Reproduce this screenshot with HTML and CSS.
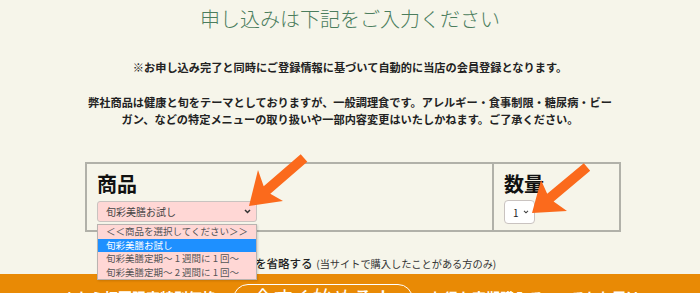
FILE: index.html
```html
<!DOCTYPE html>
<html lang="ja">
<head>
    <meta charset="UTF-8">
    <meta name="viewport" content="width=device-width, initial-scale=1.0">
    <title>お申し込み</title>
    <link rel="stylesheet" href="styles.css">
</head>
<body>

    <div class="page">
        <h1 class="title">申し込みは下記をご入力ください</h1>

        <p class="note">※お申し込み完了と同時にご登録情報に基づいて自動的に当店の会員登録となります。</p>
        <p class="notice">弊社商品は健康と旬をテーマとしておりますが、一般調理食です。アレルギー・食事制限・糖尿病・ビー<br>ガン、などの特定メニューの取り扱いや一部内容変更はいたしかねます。ご了承ください。</p>

        <table class="order">
            <tr>
                <td class="col-item">
                    <div class="label">商品</div>
                    <div class="select-wrap">
                        <div class="select select-item">
                            <span>旬彩美膳お試し</span>
                            <svg class="chev" width="7" height="5" viewBox="0 0 7 5"><path d="M1 1 L3.5 3.5 L6 1" fill="none" stroke="#333" stroke-width="1.5"/></svg>
                        </div>
                        <ul class="options">
                            <li>＜＜商品を選択してください＞＞</li>
                            <li class="active">旬彩美膳お試し</li>
                            <li>旬彩美膳定期～ 1 週間に 1 回～</li>
                            <li>旬彩美膳定期～ 2 週間に 1 回～</li>
                        </ul>
                    </div>
                </td>
                <td class="col-qty">
                    <div class="label">数量</div>
                    <div class="select select-qty">
                        <span>1</span>
                        <svg class="chev" width="6" height="4" viewBox="0 0 7 5"><path d="M1 1 L3.5 3.5 L6 1" fill="none" stroke="#444" stroke-width="1.4"/></svg>
                    </div>
                </td>
            </tr>
        </table>

        <div class="skip">
            <input type="checkbox" class="skip-check">
            <span class="skip-main">ログイン情報の入力を省略する</span>
            <span class="skip-sub">(当サイトで購入したことがある方のみ)</span>
        </div>

        <div class="band">
            <span class="band-text band-left">いまなら初回限定特別価格</span>
            <span class="band-btn">今すぐ始める！</span>
            <span class="band-text band-right">お得な定期購入でいつでもお届け</span>
        </div>

        <!-- 注意喚起の矢印 -->
        <svg class="arrows" width="700" height="293" viewBox="0 0 700 293">
            <polygon points="249,206 258,170 263.7,186.2 300.7,154.2 307.3,161.8 270.3,193.8 283,201" fill="#fb6a1c"/>
            <polygon points="532,213 541,180 547.2,193.8 583.8,163.2 590.2,170.8 553.6,201.4 567,211" fill="#fb6a1c"/>
        </svg>
    </div>

</body>
</html>
```

FILE: styles.css
```css
body {
    margin: 0;
    background-color: #f6f5ea;
    font-family: "Noto Sans CJK JP", "Noto Sans", sans-serif;
    color: #222;
}
.page {
    position: relative;
    width: 700px;
    height: 293px;
    overflow: hidden;
}
.title {
    margin: 5px 0 0;
    font-size: 20px;
    line-height: 28px;
    font-weight: 300;
    text-align: center;
    color: #4b7d5d;
}
.note, .notice {
    margin: 0;
    font-size: 11.2px;
    line-height: 17px;
    font-weight: bold;
    text-align: center;
}
.note {
    margin-top: 26px;
}
.notice {
    margin-top: 18px;
}
.order {
    margin: 34px 0 0 85px;
    width: 536px;
    border-collapse: collapse;
}
.order td {
    border: 2px solid #b1b1a9;
    padding: 7px 10px 6px;
    vertical-align: top;
}
.col-item {
    width: 385px;
}
.label {
    font-size: 20px;
    line-height: 26px;
    font-weight: bold;
    color: #111;
    margin-bottom: 4px;
}
.select-wrap {
    position: relative;
}
.select {
    display: flex;
    align-items: center;
    justify-content: space-between;
    box-sizing: border-box;
    border: 1px solid #c9c3c0;
    border-radius: 3px;
    font-size: 10px;
    color: #444;
}
.select-item {
    width: 160px;
    height: 21px;
    padding: 0 5px 0 8px;
    background-color: #ffd7d5;
}
.select-qty {
    width: 31px;
    height: 24px;
    padding: 0 5px 0 8px;
    margin-top: -1px;
    background-color: #fff;
    border-radius: 4px;
    color: #222;
}
.options {
    position: absolute;
    top: 23px;
    left: 0;
    width: 160px;
    margin: 0;
    padding: 0;
    list-style: none;
    box-sizing: border-box;
    border: 1px solid #b9b3b0;
    background-color: #ffd7d5;
    box-shadow: 1px 1px 2px rgba(0, 0, 0, 0.15);
    z-index: 2;
}
.options li {
    height: 13.5px;
    line-height: 13.5px;
    padding-left: 8px;
    font-size: 9.5px;
    color: #555;
    white-space: nowrap;
}
.options li.active {
    background-color: #1e90ff;
    color: #fff;
}
.skip {
    margin: 20px 0 0 132px;
    height: 18px;
    line-height: 18px;
    white-space: nowrap;
}
.skip-check {
    margin: 0 4px 0 0;
    width: 12px;
    height: 12px;
    vertical-align: -2px;
}
.skip-main {
    font-size: 11.5px;
    font-weight: 500;
    color: #222;
}
.skip-sub {
    font-size: 10.2px;
    color: #333;
}
.band {
    display: flex;
    align-items: flex-start;
    margin-top: 4px;
    padding: 10px 0 0 48px;
    height: 40px;
    background-color: #e98a05;
    color: #fff;
}
.band-text {
    margin-top: 3px;
    font-size: 14px;
    line-height: 20px;
    font-weight: bold;
    white-space: nowrap;
}
.band-left {
    margin-right: 17px;
}
.band-right {
    margin-left: 17px;
}
.band-btn {
    width: 180px;
    height: 30px;
    box-sizing: border-box;
    border: 1.5px solid #fff;
    border-radius: 16px;
    text-align: center;
    font-size: 20px;
    line-height: 26px;
}
.arrows {
    position: absolute;
    top: 0;
    left: 0;
    pointer-events: none;
    z-index: 3;
}
```
